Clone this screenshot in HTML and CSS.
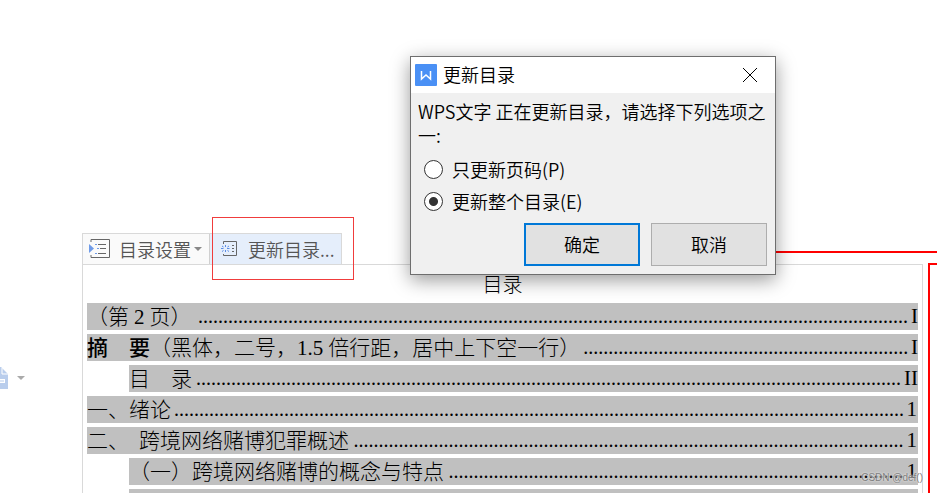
FILE: index.html
```html
<!DOCTYPE html>
<html lang="zh-CN">
<head>
    <meta charset="UTF-8">
    <meta name="viewport" content="width=device-width, initial-scale=1.0">
    <title>更新目录</title>
    <link rel="stylesheet" href="styles.css">
</head>
<body>
    <aside class="gutter">
        <button type="button" class="paste-button" aria-label="粘贴选项">
            <svg class="paste-icon" width="8" height="24" viewBox="0 0 8 24">
                <path d="M0 1h1l7 7v15H0z" fill="#b9cdec"/>
                <path d="M2 2v6h6" fill="none" stroke="#fff"/>
                <path d="M0 13h5v4H0z" fill="#fff"/>
                <path d="M0 15h4" stroke="#b9cdec"/>
            </svg>
            <svg width="8" height="4" viewBox="0 0 8 4"><path d="M0 0h8L4 4z" fill="#aaa"/></svg>
        </button>
    </aside>

    <main class="document">
        <div class="toolbar">
            <button type="button" class="tool">
                <svg width="22" height="20" viewBox="0 0 22 20" fill="none">
                    <path d="M2 3V.5h18.500v18H2V16" stroke="#666"/>
                    <path d="M0 5l5 4.500-5 4.500z" fill="#6f9be8"/>
                    <path d="M6 5.500h2M8 9.500h2M6 14.500h2" stroke="#6f9be8"/>
                    <path d="M9 5.500h8M11 9.500h6M9 14.500h8" stroke="#666"/>
                </svg>
                <span class="tool-text">目录设置</span>
                <svg width="8" height="4" viewBox="0 0 8 4"><path d="M0 0h8L4 4z" fill="#888"/></svg>
            </button>
            <button type="button" class="tool active">
                <svg width="18" height="16" viewBox="0 0 18 16" fill="none">
                    <path d="M2.500 3V.5h13v14h-13V13" stroke="#666"/>
                    <path d="M11 4.500h2M11 7.500h2M11 10.500h2" stroke="#666"/>
                    <path d="M0 7.500h2.500M6 7.500h2.500M4.500 4v2M4.500 9v2M1 5l1.500 1M8 5L6.500 6M1 10.500l1.500-1M8 10.500l-1.500-1" stroke="#5b8de6"/>
                </svg>
                <span class="tool-text">更新目录...</span>
            </button>
        </div>

        <section class="toc">
            <h1>目录</h1>
            <ul id="tocList">
                <li><span class="entry">（第<span class="num">2</span>页）</span><span class="dots"></span><span class="page">I</span></li>
                <li><span class="entry"><b>摘　要</b>（黑体，二号，<span class="num first">1.5</span>倍行距，居中上下空一行）</span><span class="dots"></span><span class="page">I</span></li>
                <li class="indent"><span class="entry">目　录</span><span class="dots"></span><span class="page">II</span></li>
                <li><span class="entry">一、绪论</span><span class="dots"></span><span class="page number">1</span></li>
                <li><span class="entry">二、<span class="wide">跨境网络赌博犯罪概述</span></span><span class="dots"></span><span class="page number">1</span></li>
                <li class="indent"><span class="entry">（一）跨境网络赌博的概念与特点</span><span class="dots"></span><span class="page number">1</span></li>
                <li class="indent"></li>
            </ul>
        </section>
    </main>

    <div class="mark-line"></div>
    <div class="mark-frame"></div>
    <div class="mark-box"></div>

    <form class="dialog" role="dialog" aria-labelledby="dialogTitle">
        <header class="dialog-title">
            <svg width="22" height="22" viewBox="0 0 22 22">
                <rect width="22" height="22" rx="1" fill="#4a90f5"/>
                <path d="M6.500 7v8L11 11l4.500 4V7" fill="none" stroke="#fff" stroke-width="1.500"/>
            </svg>
            <h2 id="dialogTitle">更新目录</h2>
            <button type="button" class="close" aria-label="关闭">
                <svg width="16" height="16" viewBox="0 0 16 16"><path d="M1 1l14 14M15 1L1 15" stroke="#000"/></svg>
            </button>
        </header>
        <div class="dialog-body">
            <p>WPS文字 正在更新目录，请选择下列选项之一:</p>
            <label><input type="radio" name="mode" value="page">只更新页码(P)</label>
            <label><input type="radio" name="mode" value="all" checked>更新整个目录(E)</label>
            <div class="actions">
                <button type="button" class="primary">确定</button>
                <button type="button">取消</button>
            </div>
        </div>
    </form>

    <div class="watermark">CSDN @def()</div>

    <script>
        // Fill the leaders between each heading and its page number
        document.querySelectorAll('#tocList .dots').forEach(function (dots) {
            const count = Math.floor(dots.clientWidth / 5);
            dots.textContent = '.'.repeat(count);
        });
    </script>
</body>
</html>
```
FILE: styles.css
```css
* {
    box-sizing: border-box;
}

body {
    margin: 0;
    height: 100vh;
    overflow: hidden;
    position: relative;
    display: flex;
    background-color: #ffffff;
    font-family: "Noto Sans CJK SC", sans-serif;
    font-size: 18px;
    color: #000000;
}

button {
    font: inherit;
    padding: 0;
    border: none;
    background: none;
}

svg {
    display: block;
    flex: none;
}

.gutter {
    width: 82px;
    flex: none;
    padding-top: 366px;
}

.paste-button {
    display: flex;
    align-items: center;
    gap: 9px;
}

.document {
    flex: 1;
    min-width: 0;
    padding-top: 233px;
    margin-right: 14px;
}

/* Toolbar above the table of contents */
.toolbar {
    display: flex;
    width: 260px;
    height: 31px;
    border: 1px solid #d9d9d9;
    border-bottom: none;
    background-color: #fafafa;
}

.tool {
    display: flex;
    align-items: center;
    flex: 1;
    padding-left: 6px;
    line-height: 30px;
    color: #555555;
}

.tool .tool-text {
    margin-left: 8px;
    margin-right: 3px;
    font-weight: 350;
    white-space: nowrap;
}

.tool.active {
    padding-left: 11px;
    border-left: 1px solid #d0d0d0;
    background-color: #e5eefb;
}

.tool.active .tool-text {
    margin-left: 9px;
    margin-right: 0;
}

.toc {
    border: 1px solid #d9d9d9;
    border-bottom: none;
    padding: 0 4px;
    font-size: 21px;
    font-weight: 300;
}

.toc h1 {
    margin: 0;
    font-size: 20px;
    font-weight: 300;
    line-height: 38px;
    text-align: center;
}

.toc ul {
    margin: 0;
    padding: 0;
    list-style: none;
}

.toc li {
    display: flex;
    height: 27px;
    margin-bottom: 4px;
    line-height: 27px;
    background-color: #c0c0c0;
    white-space: nowrap;
}

.toc .indent {
    margin-left: 42px;
}

.toc .entry {
    line-height: 24px;
}

.toc .num {
    font-family: "Liberation Serif", serif;
    margin: 0 5px;
}

.toc .first {
    margin-left: 0;
}

.toc b {
    font-weight: 500;
}

.wide {
    margin-left: 10px;
}

.dots {
    flex: 1;
    min-width: 0;
    margin: 0 3px;
    overflow: hidden;
    text-align: right;
    font-family: "Liberation Serif", serif;
    font-size: 20px;
}

.page {
    font-family: "Liberation Serif", serif;
}

.page.number {
    margin-right: 1px;
}

/* Red marks drawn over the document */
.mark-line {
    position: absolute;
    top: 251px;
    left: 600px;
    right: 0;
    height: 2px;
    background-color: #ff0000;
}

.mark-frame {
    position: absolute;
    top: 263px;
    right: 0;
    bottom: 0;
    width: 9px;
    border-top: 2px solid #ff0000;
    border-left: 2px solid #ff0000;
}

.mark-box {
    position: absolute;
    top: 217px;
    left: 212px;
    width: 142px;
    height: 63px;
    border: 1px solid #f03c3c;
}

.dialog {
    position: absolute;
    top: 56px;
    left: 410px;
    width: 366px;
    border: 1px solid #6e6e6e;
    background-color: #f0f0f0;
    box-shadow: 0 5px 18px rgba(0, 0, 0, 0.4);
    font-weight: 350;
}

.dialog-title {
    display: flex;
    align-items: center;
    height: 36px;
    padding: 0 17px 0 4px;
    background-color: #ffffff;
}

.dialog-title h2 {
    flex: 1;
    margin: 0 0 0 6px;
    font-size: 18px;
    font-weight: 350;
    line-height: 34px;
    height: 36px;
}

.dialog-body {
    padding: 6px 0 8px 7px;
}

.dialog p {
    margin: 0 0 6px;
    line-height: 24px;
}

.dialog label {
    display: flex;
    align-items: center;
    height: 32px;
    padding-left: 6px;
}

.dialog input {
    appearance: none;
    width: 19px;
    height: 19px;
    margin: 0 9px 0 0;
    border: 1px solid #333333;
    border-radius: 50%;
    background-color: #ffffff;
}

.dialog input:checked {
    background-image: radial-gradient(circle, #333333 4px, transparent 5px);
}

.actions {
    display: flex;
    justify-content: flex-end;
    gap: 11px;
    margin-top: 6px;
    padding-right: 8px;
}

.actions button {
    width: 116px;
    height: 43px;
    padding-bottom: 2px;
    border: 1px solid #adadad;
    background-color: #e1e1e1;
    color: #000000;
}

.actions .primary {
    border: 2px solid #0078d7;
}

.watermark {
    position: absolute;
    right: 14px;
    bottom: 7px;
    font-family: "Liberation Sans", sans-serif;
    font-size: 10px;
    line-height: 16px;
    color: #808080;
    text-shadow: 0 0 2px #ffffff;
}
```
